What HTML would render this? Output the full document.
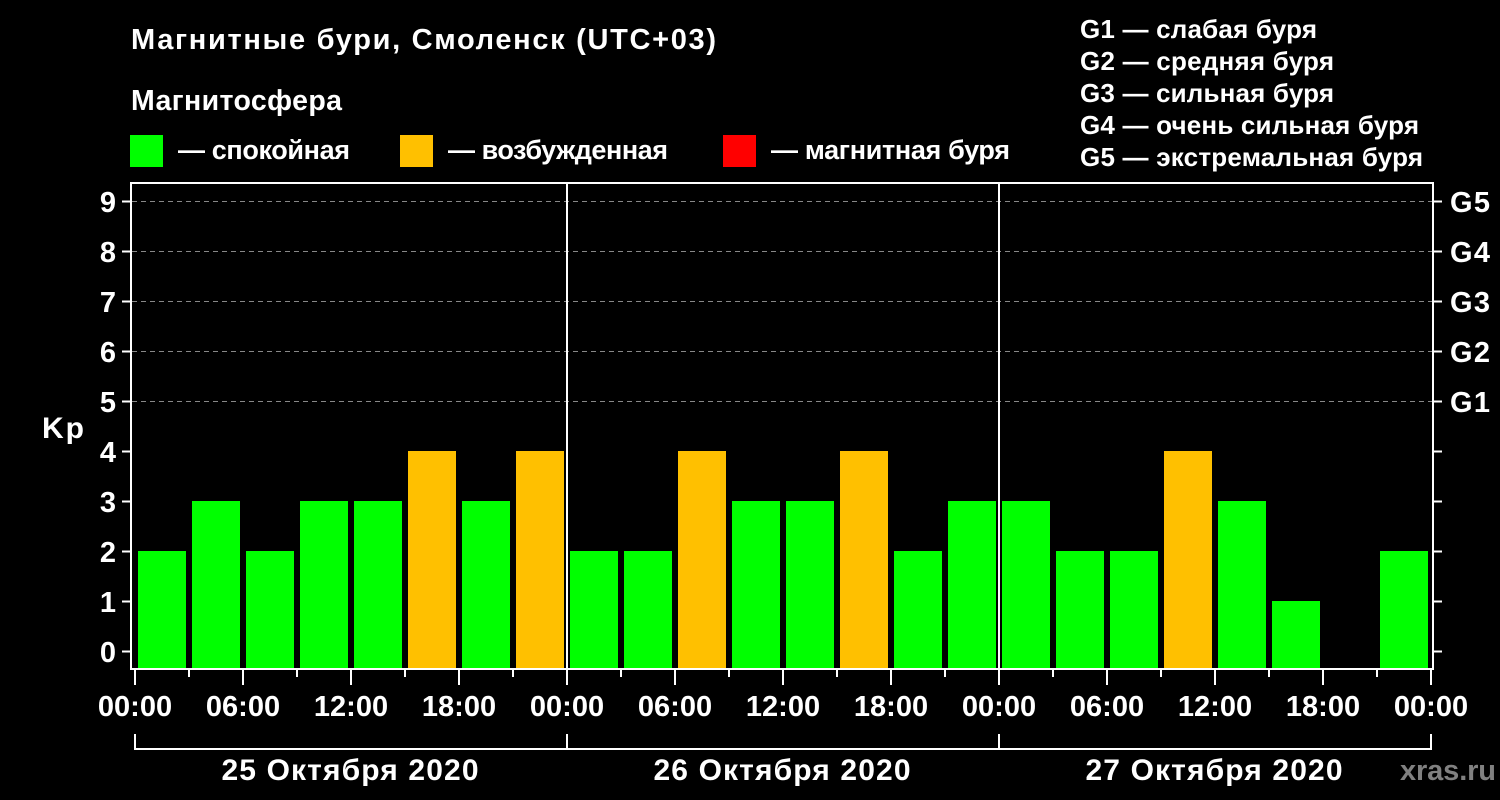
<!DOCTYPE html>
<html><head><meta charset="utf-8"><style>html,body{margin:0;padding:0;background:#000;}svg{display:block}</style></head>
<body>
<svg width="1500" height="800" xmlns="http://www.w3.org/2000/svg" font-family="'Liberation Sans', 'DejaVu Sans', sans-serif" font-weight="bold" fill="#fff">
<rect width="1500" height="800" fill="#000"/>
<text x="131" y="49" font-size="29" textLength="585" lengthAdjust="spacing">Магнитные бури, Смоленск (UTC+03)</text>
<text x="131" y="110" font-size="28.5" textLength="211" lengthAdjust="spacing">Магнитосфера</text>
<rect x="130" y="135" width="33" height="32" fill="#00ff00"/>
<text x="178" y="159" font-size="27" textLength="172" lengthAdjust="spacing">— спокойная</text>
<rect x="400" y="135" width="33" height="32" fill="#ffc000"/>
<text x="448" y="159" font-size="27" textLength="220" lengthAdjust="spacing">— возбужденная</text>
<rect x="723" y="135" width="33" height="32" fill="#ff0000"/>
<text x="771" y="159" font-size="27" textLength="239" lengthAdjust="spacing">— магнитная буря</text>
<g font-size="26">
<text x="1080" y="38" textLength="237" lengthAdjust="spacing">G1 — слабая буря</text>
<text x="1080" y="70" textLength="254" lengthAdjust="spacing">G2 — средняя буря</text>
<text x="1080" y="102" textLength="254" lengthAdjust="spacing">G3 — сильная буря</text>
<text x="1080" y="134" textLength="339" lengthAdjust="spacing">G4 — очень сильная буря</text>
<text x="1080" y="166" textLength="343" lengthAdjust="spacing">G5 — экстремальная буря</text>
</g>
<g stroke="#888" stroke-width="1" stroke-dasharray="5,4">
<line x1="132" y1="201.5" x2="1432" y2="201.5"/>
<line x1="132" y1="251.5" x2="1432" y2="251.5"/>
<line x1="132" y1="301.5" x2="1432" y2="301.5"/>
<line x1="132" y1="351.5" x2="1432" y2="351.5"/>
<line x1="132" y1="401.5" x2="1432" y2="401.5"/>
</g>
<g>
<rect x="138" y="551" width="48" height="117" fill="#00ff00"/>
<rect x="192" y="501" width="48" height="167" fill="#00ff00"/>
<rect x="246" y="551" width="48" height="117" fill="#00ff00"/>
<rect x="300" y="501" width="48" height="167" fill="#00ff00"/>
<rect x="354" y="501" width="48" height="167" fill="#00ff00"/>
<rect x="408" y="451" width="48" height="217" fill="#ffc000"/>
<rect x="462" y="501" width="48" height="167" fill="#00ff00"/>
<rect x="516" y="451" width="48" height="217" fill="#ffc000"/>
<rect x="570" y="551" width="48" height="117" fill="#00ff00"/>
<rect x="624" y="551" width="48" height="117" fill="#00ff00"/>
<rect x="678" y="451" width="48" height="217" fill="#ffc000"/>
<rect x="732" y="501" width="48" height="167" fill="#00ff00"/>
<rect x="786" y="501" width="48" height="167" fill="#00ff00"/>
<rect x="840" y="451" width="48" height="217" fill="#ffc000"/>
<rect x="894" y="551" width="48" height="117" fill="#00ff00"/>
<rect x="948" y="501" width="48" height="167" fill="#00ff00"/>
<rect x="1002" y="501" width="48" height="167" fill="#00ff00"/>
<rect x="1056" y="551" width="48" height="117" fill="#00ff00"/>
<rect x="1110" y="551" width="48" height="117" fill="#00ff00"/>
<rect x="1164" y="451" width="48" height="217" fill="#ffc000"/>
<rect x="1218" y="501" width="48" height="167" fill="#00ff00"/>
<rect x="1272" y="601" width="48" height="67" fill="#00ff00"/>
<rect x="1380" y="551" width="48" height="117" fill="#00ff00"/>
</g>
<g stroke="#fff" stroke-width="2" fill="none">
<path d="M131 183 H1433 V669 H131 Z"/>
<line x1="567" y1="183" x2="567" y2="669"/>
<line x1="999" y1="183" x2="999" y2="669"/>
<path d="M122 201.5H131M122 251.5H131M122 301.5H131M122 351.5H131M122 401.5H131M122 451.5H131M122 501.5H131M122 551.5H131M122 601.5H131M122 651.5H131"/>
<path d="M1433 201.5H1442M1433 251.5H1442M1433 301.5H1442M1433 351.5H1442M1433 401.5H1442M1433 451.5H1442M1433 501.5H1442M1433 551.5H1442M1433 601.5H1442M1433 651.5H1442"/>
<path d="M135 669V685M243 669V685M351 669V685M459 669V685M567 669V685M675 669V685M783 669V685M891 669V685M999 669V685M1107 669V685M1215 669V685M1323 669V685M1431 669V685"/>
<path d="M189 669V677M297 669V677M405 669V677M513 669V677M621 669V677M729 669V677M837 669V677M945 669V677M1053 669V677M1161 669V677M1269 669V677M1377 669V677"/>
<path d="M135 734V749H1431V734M567 734V749M999 734V749"/>
</g>
<g font-size="29" text-anchor="end">
<text x="116" y="212">9</text><text x="116" y="262">8</text><text x="116" y="312">7</text><text x="116" y="362">6</text><text x="116" y="412">5</text><text x="116" y="462">4</text><text x="116" y="512">3</text><text x="116" y="562">2</text><text x="116" y="612">1</text><text x="116" y="662">0</text>
</g>
<text x="42" y="438" font-size="30" textLength="42" lengthAdjust="spacing">Kp</text>
<g font-size="29">
<text x="1450" y="212" textLength="40" lengthAdjust="spacing">G5</text>
<text x="1450" y="262" textLength="40" lengthAdjust="spacing">G4</text>
<text x="1450" y="312" textLength="40" lengthAdjust="spacing">G3</text>
<text x="1450" y="362" textLength="40" lengthAdjust="spacing">G2</text>
<text x="1450" y="412" textLength="40" lengthAdjust="spacing">G1</text>
</g>
<g font-size="29" text-anchor="middle">
<text x="135" y="716">00:00</text><text x="243" y="716">06:00</text><text x="351" y="716">12:00</text><text x="459" y="716">18:00</text>
<text x="567" y="716">00:00</text><text x="675" y="716">06:00</text><text x="783" y="716">12:00</text><text x="891" y="716">18:00</text>
<text x="999" y="716">00:00</text><text x="1107" y="716">06:00</text><text x="1215" y="716">12:00</text><text x="1323" y="716">18:00</text><text x="1431" y="716">00:00</text>
</g>
<g font-size="30" text-anchor="middle">
<text x="350" y="780" textLength="257" lengthAdjust="spacing">25 Октября 2020</text>
<text x="782" y="780" textLength="257" lengthAdjust="spacing">26 Октября 2020</text>
<text x="1214" y="780" textLength="257" lengthAdjust="spacing">27 Октября 2020</text>
</g>
<text x="1400" y="780" font-size="29" fill="#808080" textLength="96" lengthAdjust="spacing">xras.ru</text>
</svg>
</body></html>
